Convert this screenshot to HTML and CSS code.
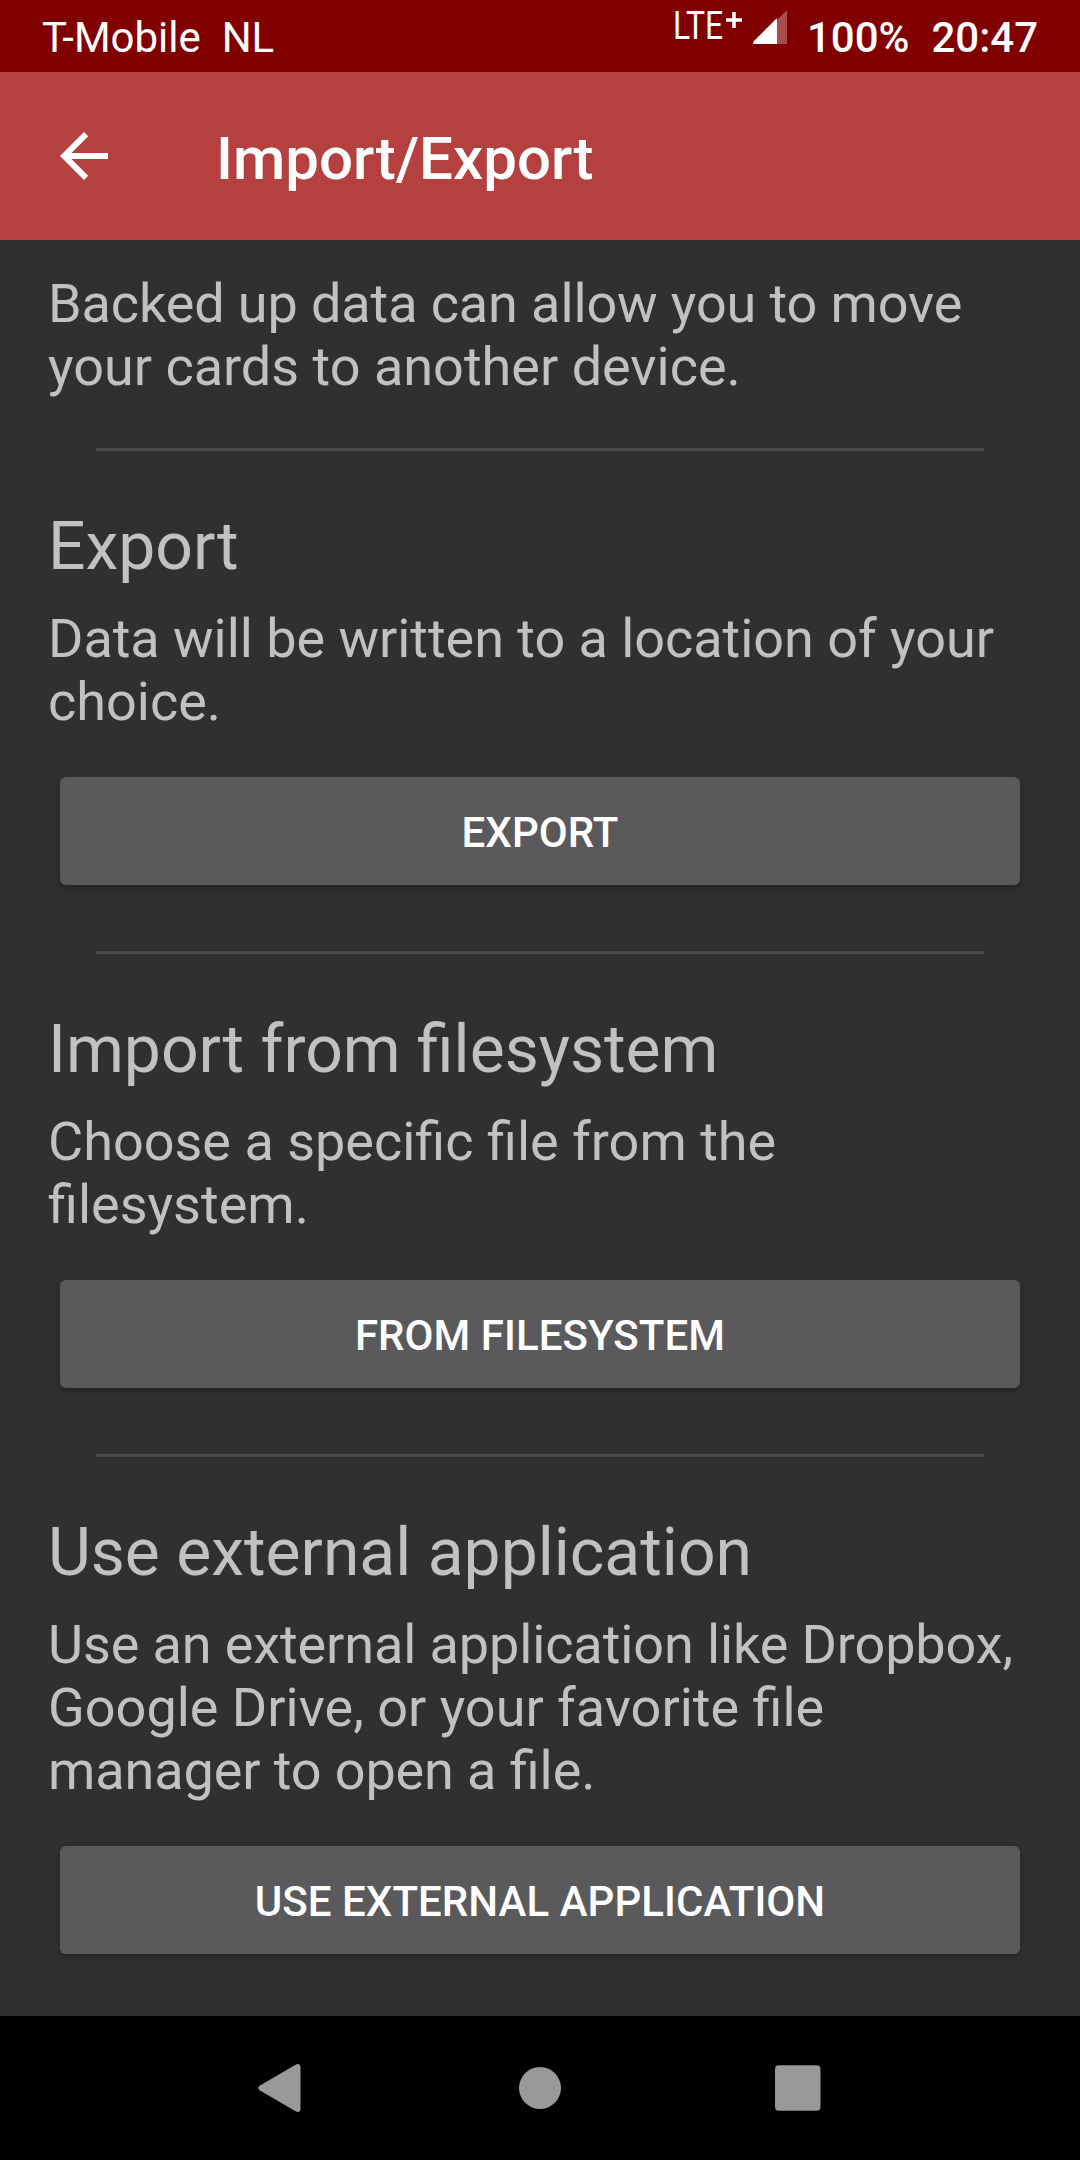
FILE: index.html
```html
<!DOCTYPE html>
<html lang="en">
<head>
<meta charset="utf-8">
<title>Import/Export</title>
<link rel="stylesheet" href="styles.css">
</head>
<body>
<div class="screen">
  <div class="status">
    <span class="carrier">T-Mobile&nbsp; NL</span>
    <svg class="network" viewBox="0 0 72 60"><text x="0" y="39" textLength="50" lengthAdjust="spacingAndGlyphs">LTE</text><path d="M53 20H69M61 12V28" fill="none" stroke="#fff" stroke-width="3.5"/></svg>
    <svg class="signal" viewBox="0 0 34 34"><path d="M24 10L33 1Q34 0 34 2V33Q34 34 33 34H24Z" fill="#fff" fill-opacity=".3"/><path d="M24 8V34H1Q-.5 34 .5 31.500Z" fill="#fff"/></svg>
    <span class="battery">100%</span>
    <span class="clock">20:47</span>
  </div>
  <header class="appbar">
    <svg class="back" viewBox="0 0 24 24"><path d="M20 11H7.830l5.590-5.590L12 4l-8 8 8 8 1.410-1.410L7.830 13H20v-2z" fill="#fff"/></svg>
    <h1>Import/Export</h1>
  </header>
  <main class="content">
    <p><span class="tight">Backed up data can allow you to move</span><br>your cards to another device.</p>
    <hr>
    <section>
      <h2>Export</h2>
      <p><span class="snug">Data will be written to a location of your</span><br>choice.</p>
      <button>EXPORT</button>
    </section>
    <hr>
    <section>
      <h2>Import from filesystem</h2>
      <p>Choose a specific file from the<br>filesystem.</p>
      <button>FROM FILESYSTEM</button>
    </section>
    <hr>
    <section>
      <h2>Use external application</h2>
      <p><span class="tight">Use an external application like Dropbox,</span><br>Google Drive, or your favorite file<br><span class="tight">manager to open a </span>file.</p>
      <button>USE EXTERNAL APPLICATION</button>
    </section>
  </main>
  <nav class="navbar">
    <svg viewBox="0 0 48 48"><path d="M43.500 3V45Q43 49 39 47.500L3 26.500Q-.5 24 3 21.500L39 .5Q43-1 43.500 3Z" fill="#999"/></svg>
    <svg viewBox="0 0 48 48"><circle cx="24" cy="24" r="21" fill="#999"/></svg>
    <svg viewBox="0 0 48 48"><rect x="0" y="1.250" width="45.500" height="45.500" rx="4" fill="#999"/></svg>
  </nav>
</div>
</body>
</html>
```
FILE: styles.css
```css
* { box-sizing: border-box; }
body { margin: 0; background: #303030; font-family: Roboto, sans-serif; }
.screen { display: flex; flex-direction: column; width: 1080px; height: 2160px; overflow: hidden; }
.status { display: flex; flex-shrink: 0; height: 72px; padding: 0 42px; background: #800000; color: #fff; font-size: 42px; line-height: 75px; white-space: nowrap; }
.carrier { margin-right: auto; }
.network { width: 72px; height: 60px; margin-right: 8px; fill: #fff; font-size: 38px; }
.signal { width: 34px; height: 34px; margin: 10px 20px 0 0; }
.battery { margin-right: 22px; font-weight: 500; }
.clock { font-weight: 500; }
.appbar { display: flex; flex-shrink: 0; align-items: center; height: 168px; padding-left: 48px; background: #b54040; color: #fff; }
.back { width: 72px; height: 72px; }
.appbar h1 { margin: 4px 0 0 96px; font-size: 60px; font-weight: 500; }
.content { flex: 1; min-height: 0; padding: 32px 48px 0; color: #c1c1c1; }
p { margin: 0; font-size: 54px; line-height: 63px; white-space: nowrap; }
.tight { letter-spacing: -.11px; }
.snug { letter-spacing: -.04px; }
hr { height: 3px; margin: 50px 48px 57px; border: 0; background: #494949; }
h2 { margin: 0 0 22px; font-size: 66px; font-weight: 400; line-height: 77px; }
button { display: block; width: 960px; height: 108px; margin: 44px 12px 66px; padding: 3px 0 0; border: 0; border-radius: 6px; background: #5a5a5c; box-shadow: 0 3px 6px rgba(0, 0, 0, .25); color: #fff; font: 500 42px/105px Roboto, sans-serif; letter-spacing: .05px; }
section:last-child button { margin-bottom: 0; }
.navbar { display: flex; flex-shrink: 0; justify-content: center; align-items: center; gap: 211px; height: 144px; background: #000; }
.navbar svg { width: 48px; height: 48px; }
```
